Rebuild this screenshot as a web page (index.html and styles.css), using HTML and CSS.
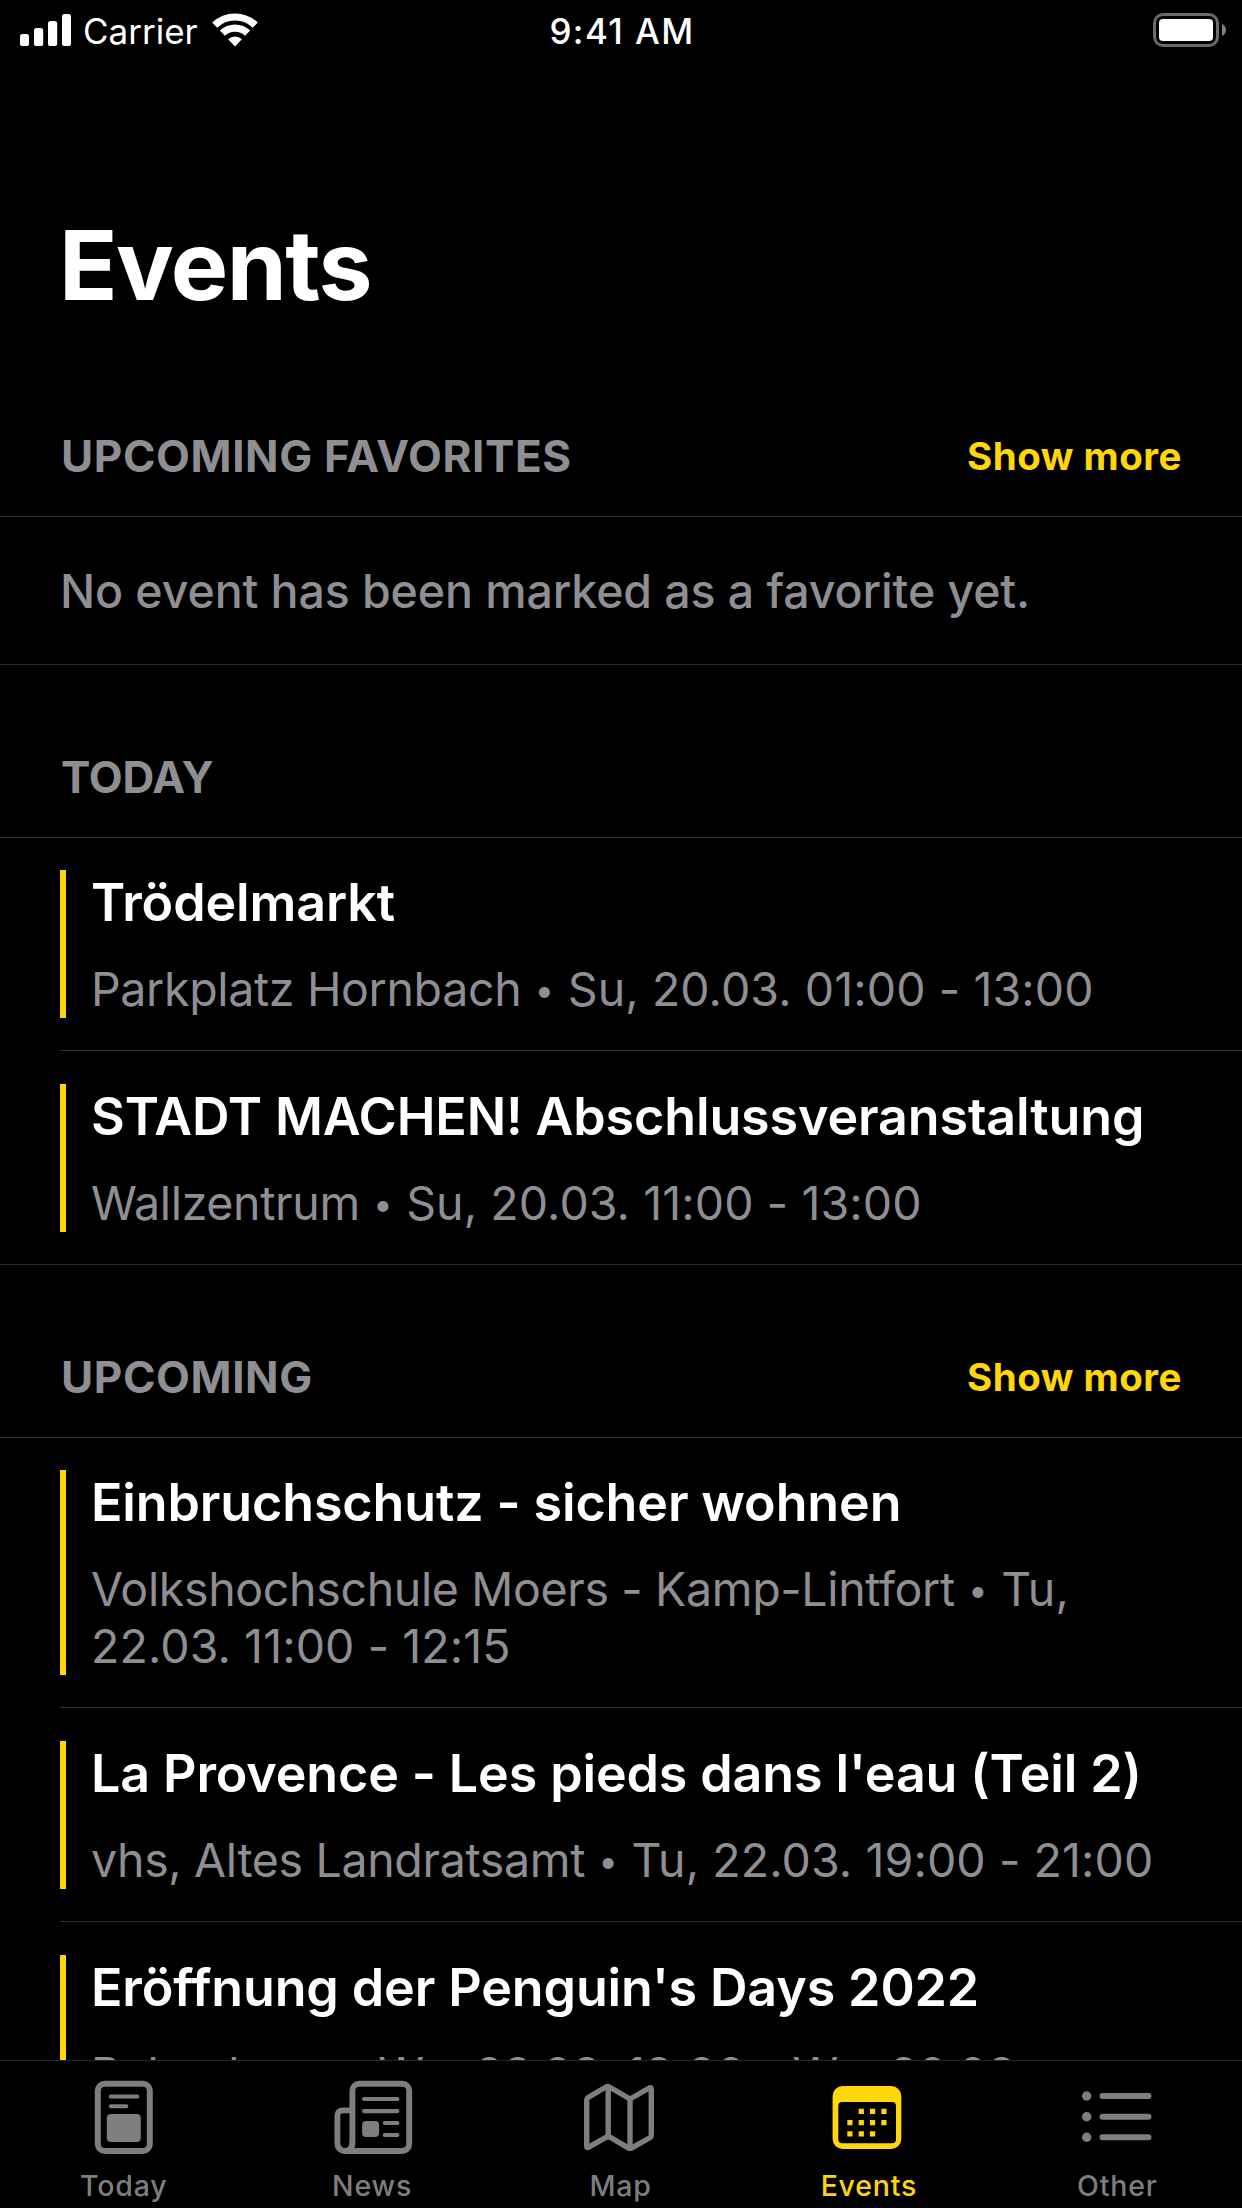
FILE: index.html
```html
<!DOCTYPE html>
<html lang="en">
<head>
<meta charset="utf-8">
<title>Events</title>
<link rel="stylesheet" href="styles.css">
</head>
<body>
<div class="screen">
  <header class="status">
    <div class="status-left">
      <svg class="signal" width="51" height="34" viewBox="0 0 51 34" fill="currentColor">
        <rect x="0" y="20" width="9" height="12" rx="2.6"/>
        <rect x="14" y="14" width="9.2" height="18" rx="2.6"/>
        <rect x="28" y="7" width="9.2" height="25" rx="2.6"/>
        <rect x="42" y="0" width="9" height="32" rx="2.6"/>
      </svg>
      <span class="carrier">Carrier</span>
      <svg class="wifi" width="46" height="36" viewBox="0 0 46 36" fill="none" stroke="currentColor">
        <path d="M2.7 13.1a29.5 29.5 0 0 1 40.6 0" stroke-width="7.2"/>
        <path d="M10.4 21.2a18.2 18.2 0 0 1 25.2 0" stroke-width="7.4"/>
        <path d="M23 34.4l-6.9-7.2a10.2 10.2 0 0 1 13.8 0z" fill="currentColor" stroke="none"/>
      </svg>
    </div>
    <span class="time">9:41 AM</span>
    <svg class="battery" width="74" height="34" viewBox="0 0 74 34">
      <rect class="battery-shell" x="1.5" y="1.5" width="63" height="31" rx="8.5"/>
      <rect x="6" y="6" width="54" height="22" rx="4" fill="#fff"/>
      <path class="battery-nub" d="M69 11c5.3 2 5.3 10 0 12z"/>
    </svg>
  </header>

  <main class="content">
    <h1 class="title">Events</h1>

    <section class="section">
      <div class="section-head">
        <h2>UPCOMING FAVORITES</h2>
        <a class="more">Show more</a>
      </div>
      <p class="empty">No event has been marked as a favorite yet.</p>
    </section>

    <section class="section">
      <div class="section-head"><h2 class="tight">TODAY</h2></div>
      <ul class="list">
        <li class="event"><div class="event-body">
          <h3>Trödelmarkt</h3>
          <p><span class="venue">Parkplatz Hornbach</span> <span class="dot">•</span> Su, 20.03. 01:00 - 13:00</p>
        </div></li>
        <li class="event"><div class="event-body">
          <h3>STADT MACHEN! Abschlussveranstaltung</h3>
          <p><span class="venue">Wallzentrum</span> <span class="dot">•</span> Su, 20.03. 11:00 - 13:00</p>
        </div></li>
      </ul>
    </section>

    <section class="section">
      <div class="section-head">
        <h2>UPCOMING</h2>
        <a class="more">Show more</a>
      </div>
      <ul class="list">
        <li class="event"><div class="event-body">
          <h3>Einbruchschutz - sicher wohnen</h3>
          <p><span class="venue">Volkshochschule Moers - Kamp-Lintfort</span> <span class="dot">•</span> Tu,<br>22.03. 11:00 - 12:15</p>
        </div></li>
        <li class="event"><div class="event-body">
          <h3>La Provence - Les pieds dans l'eau (Teil 2)</h3>
          <p><span class="venue">vhs, Altes Landratsamt</span> <span class="dot">•</span> Tu, 22.03. 19:00 - 21:00</p>
        </div></li>
        <li class="event"><div class="event-body">
          <h3>Eröffnung der Penguin's Days 2022</h3>
          <p class="condensed"><span class="venue">Pulverhaus</span> <span class="dot">•</span> We, 23.03. 19:00 - We, 30.03.</p>
        </div></li>
      </ul>
    </section>
  </main>

  <nav class="tabs">
    <a class="tab">
      <svg width="90" height="90" viewBox="0 0 90 90" fill="none" stroke="currentColor" stroke-linecap="round">
        <rect x="18.8" y="13.7" width="52" height="67.3" rx="7" stroke-width="6"/>
        <path d="M31.8 26.6h26.5M31.8 36.3h15.6" stroke-width="4"/>
        <rect x="27.8" y="44" width="34" height="28" rx="4" fill="currentColor" stroke="none"/>
      </svg>
      <span>Today</span>
    </a>
    <a class="tab">
      <svg width="90" height="90" viewBox="0 0 90 90" fill="none" stroke="currentColor" stroke-linecap="round">
        <path d="M17 81h57.2a7 7 0 0 0 7-7V20.7a7 7 0 0 0-7-7H31.4a7 7 0 0 0-7 7v52.8" stroke-width="5.9"/>
        <path d="M23 40.4h-8.6a5 5 0 0 0-5 5v28.1a7.5 7.5 0 0 0 15 0" stroke-width="5.9"/>
        <path d="M36.1 29h33.3M36.1 41.1h33.3M56.8 53h12.6M56.8 65h12.6" stroke-width="4.2"/>
        <rect x="34.1" y="51" width="17" height="16" rx="4" fill="currentColor" stroke="none"/>
      </svg>
      <span>News</span>
    </a>
    <a class="tab">
      <svg width="90" height="90" viewBox="0 0 90 90" fill="none" stroke="currentColor" stroke-width="5.4" stroke-linejoin="round">
        <path d="M10.7 30.3q0-2 1.8-3L29.9 17q1.8-1 3.6 0L54 29l19.2-11q2.1-1.1 2.1 1v46q0 2-1.8 3L55.8 77.8q-1.8 1-3.6 0L32.2 66.2 12.7 77.2q-2 1-2-1z"/>
        <path d="M32.2 17v49M54 29v49"/>
      </svg>
      <span>Map</span>
    </a>
    <a class="tab active">
      <svg width="90" height="90" viewBox="0 0 90 90" fill="currentColor">
        <path fill-rule="evenodd" d="M18.6 16h48.7a10 10 0 0 1 10 10v43a10 10 0 0 1-10 10H18.6a10 10 0 0 1-10-10V26a10 10 0 0 1 10-10zM18.3 32a4 4 0 0 0-4 4v33.3a4 4 0 0 0 4 4H68a4 4 0 0 0 4-4V36a4 4 0 0 0-4-4z"/>
        <path d="M37.3 38.8v5.2M48.6 38.8v5.2M59.9 38.8v5.2M25.9 50.1v5.2M37.3 50.1v5.2M48.6 50.1v5.2M59.9 50.1v5.2M25.9 61.2v5.2M37.3 61.2v5.2M48.6 61.2v5.2" stroke="currentColor" stroke-width="5.2"/>
      </svg>
      <span>Events</span>
    </a>
    <a class="tab">
      <svg width="90" height="90" viewBox="0 0 90 90" fill="currentColor">
        <circle cx="13.7" cy="26" r="4.7"/><circle cx="13.7" cy="46.7" r="4.7"/><circle cx="13.7" cy="67.3" r="4.7"/>
        <path d="M29.5 26h46M29.5 46.7h46M29.5 67.3h46" stroke="currentColor" stroke-width="6" stroke-linecap="round"/>
      </svg>
      <span>Other</span>
    </a>
  </nav>
</div>
</body>
</html>
```
FILE: styles.css
```css
* {
  box-sizing: border-box;
  margin: 0;
  padding: 0;
}

body {
  background: #000;
  color: #fff;
  font-family: Inter, "Liberation Sans", sans-serif;
  white-space: nowrap;
}

.screen {
  display: flex;
  flex-direction: column;
  width: 1242px;
  height: 2208px;
  overflow: hidden;
}

/* Status bar */
.status {
  display: grid;
  grid-template-columns: 1fr auto 1fr;
  height: 60px;
  padding: 0 15px 0 20px;
  font-size: 35px;
  line-height: 42px;
}

.status-left {
  display: flex;
}

.signal {
  margin-top: 14px;
}

.carrier {
  width: 129px;
  margin: 10px 0 0 12px;
}

.time {
  margin: 10px 3px 0 0;
  font-weight: 500;
  font-size: 35px;
  letter-spacing: 1.4px;
}

.wifi {
  margin-top: 12px;
}

.battery {
  margin-top: 13px;
  justify-self: end;
}

.battery-shell {
  fill: none;
  stroke: #6a6a6a;
  stroke-width: 3;
}

.battery-nub {
  fill: #808080;
}

/* Content */
.content {
  flex: 1;
  min-height: 0;
  overflow: hidden;
}

.title {
  height: 284px;
  padding: 147px 60px 0 59px;
  font-size: 96.5px;
  font-weight: 700;
  line-height: 116px;
  letter-spacing: -1.5px;
}

.section {
  border-bottom: 1px solid #303032;
}

.section-head {
  display: flex;
  justify-content: space-between;
  align-items: flex-end;
  height: 173px;
  padding: 0 60px 32px 61px;
  border-bottom: 1px solid #303032;
}

.section-head h2 {
  color: #8e8e93;
  font-size: 44px;
  font-weight: 700;
  line-height: 56px;
  letter-spacing: 0.6px;
}

.section-head .tight {
  letter-spacing: -0.2px;
}

.more {
  color: #ffd60a;
  font-size: 38.5px;
  font-weight: 700;
  line-height: 56px;
  letter-spacing: 0.5px;
}

.empty {
  height: 147px;
  padding: 46px 60px 0 60px;
  color: #8e8e93;
  font-size: 46.5px;
  font-weight: 500;
  line-height: 57px;
  letter-spacing: -0.1px;
}

.list {
  padding-left: 60px;
  list-style: none;
}

.event {
  padding: 32px 0;
}

.event + .event {
  padding-top: 33px;
  border-top: 1px solid #303032;
}

.event-body {
  padding-left: 25px;
  border-left: 6px solid #ffd60a;
}

.event h3 {
  margin-bottom: 25px;
  font-size: 52px;
  font-weight: 600;
  line-height: 66px;
  letter-spacing: -0.13px;
}

.event p {
  color: #8e8e93;
  font-size: 46.5px;
  line-height: 57px;
  letter-spacing: 0.1px;
}

.event .condensed {
  letter-spacing: -0.1px;
}

.venue {
  letter-spacing: -0.35px;
}

.dot {
  display: inline-block;
  width: 20px;
  font-size: 35px;
  line-height: 1;
  text-align: center;
  vertical-align: 3px;
}

/* Tab bar */
.tabs {
  display: grid;
  grid-template-columns: repeat(5, 1fr);
  height: 148px;
  border-top: 1px solid #252527;
}

.tab {
  display: flex;
  flex-direction: column;
  align-items: center;
  padding-top: 9px;
  color: #7e7e7e;
  font-size: 28.5px;
  font-weight: 500;
  line-height: 34px;
  letter-spacing: 0.8px;
}

.tab svg {
  margin-bottom: 9px;
}

.tab span {
  margin-right: 1px;
}

.active {
  color: #ffd60a;
}
```
